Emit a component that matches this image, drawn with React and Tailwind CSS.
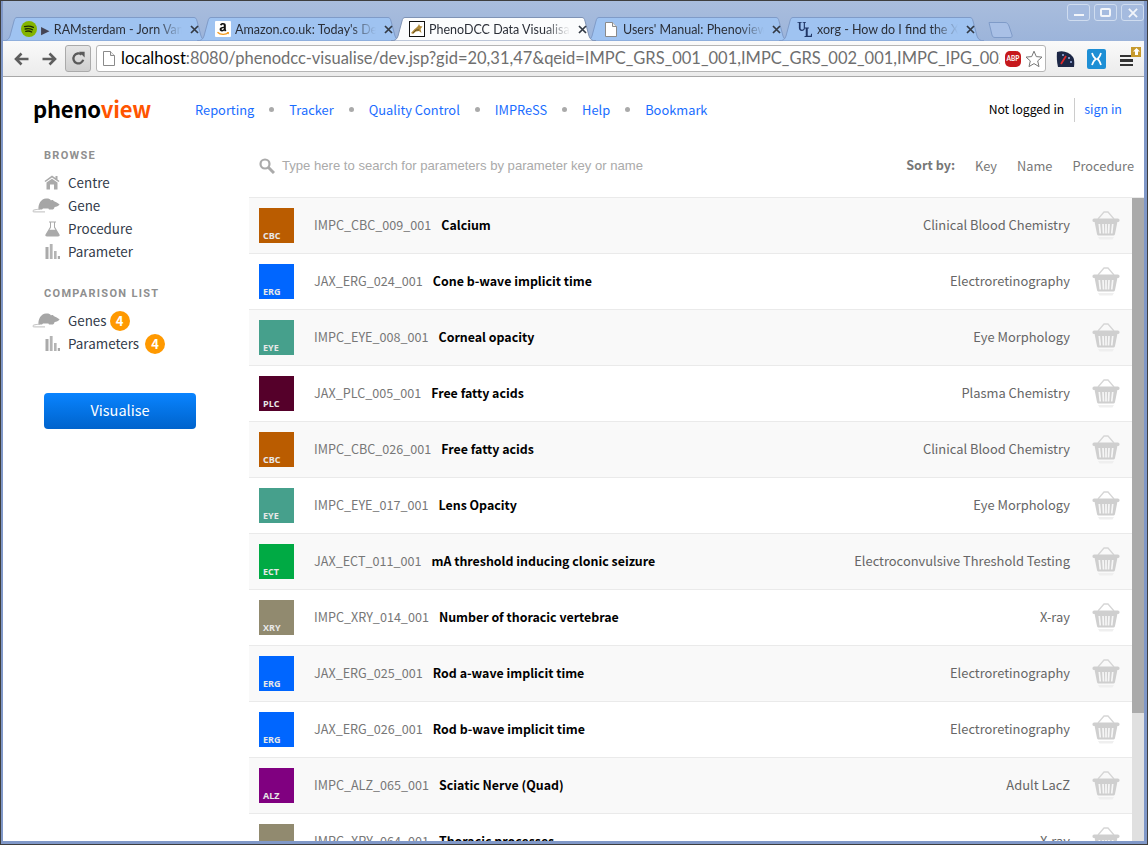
import React from "react";

const PAGE = { fontFamily: '"Noto Sans CJK SC", "Noto Sans", sans-serif' };
const UI = { fontFamily: 'Lato, "Noto Sans", sans-serif' };

const rows = [
  ["CBC", "bg-[#ba5c00]", "IMPC_CBC_009_001", "Calcium", "Clinical Blood Chemistry"],
  ["ERG", "bg-[#0066ff]", "JAX_ERG_024_001", "Cone b-wave implicit time", "Electroretinography"],
  ["EYE", "bg-[#46a08c]", "IMPC_EYE_008_001", "Corneal opacity", "Eye Morphology"],
  ["PLC", "bg-[#55002a]", "JAX_PLC_005_001", "Free fatty acids", "Plasma Chemistry"],
  ["CBC", "bg-[#ba5c00]", "IMPC_CBC_026_001", "Free fatty acids", "Clinical Blood Chemistry"],
  ["EYE", "bg-[#46a08c]", "IMPC_EYE_017_001", "Lens Opacity", "Eye Morphology"],
  ["ECT", "bg-[#00aa44]", "JAX_ECT_011_001", "mA threshold inducing clonic seizure", "Electroconvulsive Threshold Testing"],
  ["XRY", "bg-[#918a6f]", "IMPC_XRY_014_001", "Number of thoracic vertebrae", "X-ray"],
  ["ERG", "bg-[#0066ff]", "JAX_ERG_025_001", "Rod a-wave implicit time", "Electroretinography"],
  ["ERG", "bg-[#0066ff]", "JAX_ERG_026_001", "Rod b-wave implicit time", "Electroretinography"],
  ["ALZ", "bg-[#800080]", "IMPC_ALZ_065_001", "Sciatic Nerve (Quad)", "Adult LacZ"],
  ["XRY", "bg-[#918a6f]", "IMPC_XRY_064_001", "Thoracic processes", "X-ray"],
];

const nav = ["Reporting", "Tracker", "Quality Control", "IMPReSS", "Help", "Bookmark"];

function House() {
  return (
    <svg width="16" height="15" viewBox="0 0 16 15" fill="#aaa">
      <path d="M8 0.5 L0.5 6 L1.5 7 L8 2.5 L14.5 7 L15.5 6 L13.5 4.5 V1 H11.5 V3 Z" />
      <path d="M2.5 7.5 L8 3.8 L13.5 7.5 V14.5 H10 V9.5 H6 V14.5 H2.5 Z" />
    </svg>
  );
}
function Mouse() {
  return (
    <svg width="28" height="15" viewBox="0 0 28 15" fill="#a6a6a6">
      <path d="M6.5 11.5 C6 6 9 1 14 0.6 C16.5 0.4 18 1 19 2.4 C20 1.6 21.4 1.8 21.6 3 C23.6 4 26 5 27.6 6.6 C26.4 8 24.6 8.8 22.6 9 C22.4 10 21.8 11 21 11.5 H17 L16.4 10.6 H11 L10 11.5 Z" />
      <path d="M8 11.2 C4.5 11.4 1 11.8 0.8 13 C0.8 13.8 1.8 13.9 3 13.9 H13" fill="none" stroke="#bdbdbd" strokeWidth="1" />
    </svg>
  );
}
function Flask() {
  return (
    <svg width="15" height="16" viewBox="0 0 15 16" fill="#aaa">
      <path d="M4 0.5 H11 V1.5 H10 V6 L14.5 13.5 C15 14.6 14.4 15.5 13 15.5 H2 C0.6 15.5 0 14.6 0.5 13.5 L5 6 V1.5 H4 Z M6 1.5 V6.4 L4.6 8.8 H10.4 L9 6.4 V1.5 Z" fillRule="evenodd" />
    </svg>
  );
}
function Bars() {
  return (
    <svg width="15" height="15" viewBox="0 0 15 15" fill="#aaa">
      <rect x="0.5" y="3" width="3" height="12" />
      <rect x="4.8" y="0" width="2.8" height="15" fill="#b4b4b4" />
      <rect x="9" y="7" width="2.6" height="8" fill="#b4b4b4" />
      <rect x="12.8" y="12" width="2.2" height="3" />
    </svg>
  );
}
function Basket() {
  return (
    <svg width="28" height="30" viewBox="0 0 28 30" className="block">
      <path d="M6 9 L12 2 H16 L22 9" fill="none" stroke="#d6d6d6" strokeWidth="1.3" />
      <rect x="0.5" y="8.5" width="27" height="3.6" rx="1.6" fill="#cfcfcf" />
      <path d="M2.6 12 H25.4 L23 24 C22.8 25 22 25.6 21 25.6 H7 C6 25.6 5.2 25 5 24 Z" fill="#cfcfcf" />
      <path d="M7.3 14 L8.3 23.5 M11 14 L11.5 23.5 M14 14 V23.5 M17 14 L16.5 23.5 M20.7 14 L19.7 23.5" stroke="#f6f6f6" strokeWidth="1.7" />
      <path d="M6 27 H22 L20.5 29.5 H7.5 Z" fill="#efefef" />
    </svg>
  );
}
function DocIcon({ c = "#fff" }) {
  return (
    <svg width="12" height="15" viewBox="0 0 12 15" className="shrink-0">
      <path d="M0.5 0.5 H7.5 L11.5 4.5 V14.5 H0.5 Z" fill={c} stroke="#8a8a8a" />
      <path d="M7.5 0.5 V4.5 H11.5" fill="#eee" stroke="#8a8a8a" />
    </svg>
  );
}
function Spotify() {
  return (
    <svg width="16" height="16" viewBox="0 0 16 16">
      <circle cx="8" cy="8" r="8" fill="#84b400" />
      <path d="M3.6 5.6 C6.4 4.8 9.8 5 12.4 6.4 M4.2 8 C6.6 7.4 9.4 7.6 11.5 8.8 M4.8 10.3 C6.8 9.8 9 10 10.7 11" stroke="#1c2a05" strokeWidth="1.3" fill="none" strokeLinecap="round" />
    </svg>
  );
}
function Amazon() {
  return (
    <svg width="16" height="16" viewBox="0 0 16 16">
      <rect width="16" height="16" fill="#fff" rx="1" />
      <path d="M5 4 C5.3 2.6 6.6 2 8 2 C9.8 2 10.8 2.8 10.8 4.2 V8.6 L11.4 9.4 L10 10.4 L9.2 9.5 C8.6 10.2 7.8 10.5 6.9 10.5 C5.5 10.5 4.6 9.6 4.6 8.3 C4.6 6.6 6.2 5.8 8.8 5.7 V4.6 C8.8 3.9 8.4 3.5 7.8 3.5 C7.2 3.5 6.9 3.9 6.7 4.4 Z M8.8 6.9 C7.4 7 6.6 7.4 6.6 8.2 C6.6 8.7 6.9 9 7.4 9 C8.2 9 8.8 8.4 8.8 7.6 Z" fill="#111" fillRule="evenodd" />
      <path d="M2.5 11.2 C5.5 14 10.5 14 13.5 11.8" stroke="#f39a1f" strokeWidth="1.4" fill="none" />
      <path d="M11.6 11 L14 11 L13.6 13.4 Z" fill="#f39a1f" />
    </svg>
  );
}
function Pheno() {
  return (
    <svg width="16" height="16" viewBox="0 0 16 16">
      <rect x="0.5" y="0.5" width="15" height="15" fill="#fff" stroke="#111" />
      <path d="M2 12 C4 10 5 8 7 7 L9 5 L10 3 L11 5 L13.5 5.5 L11.5 8 L12.5 12 L10 10 L7 10.5 L4 13 Z" fill="#b08a3a" />
      <path d="M4 12 L7 9 L10 9" stroke="#5b4a22" strokeWidth="0.9" fill="none" />
    </svg>
  );
}
function UL() {
  return (
    <svg width="17" height="17" viewBox="0 0 17 17" fill="#1f3566">
      <path d="M0.5 0.5 H5 V1.4 H3.8 V7 C3.8 8.2 4.4 8.8 5.4 8.8 C6.5 8.8 7.2 8.2 7.2 7 V1.4 H6 V0.5 H9.5 V1.4 H8.4 V7 C8.4 9 7.2 10 5.2 10 C3.2 10 2 9 2 7 V1.4 H0.5 Z" />
      <path d="M8 6.5 H12.6 V7.4 H11.4 V15.2 H14.6 L15 13 H16 L15.8 16.4 H8 V15.5 H9.3 V7.4 H8 Z" />
    </svg>
  );
}

function Tab({ active, icon, title }) {
  return (
    <div className={`relative h-[24px] w-[205px] shrink-0 -mr-[11px] ${active ? "z-10" : ""}`}>
      <svg className="absolute inset-0" width="205" height="24" viewBox="0 0 205 24">
        <path
          d="M0 24 C4 24 6 22 7 19 L11 4 C11.6 1.5 12.5 0.5 14 0.5 H191 C192.5 0.5 193.4 1.5 194 4 L198 19 C199 22 201 24 205 24 Z"
          fill={active ? "#fbfcfd" : "#9fc3f1"}
          stroke={active ? "#7f93b5" : "#7f9bc8"}
          strokeWidth="1"
        />
      </svg>
      <div className="relative flex h-full items-center pl-[18px] pr-[9px]">
        <div className="w-[16px] h-[17px] flex items-center justify-center shrink-0">{icon}</div>
        <div
          className="ml-[4px] flex-1 min-w-0 overflow-hidden whitespace-nowrap text-[12.5px] leading-[17px] text-[#2b2f38] [mask-image:linear-gradient(to_right,#000_82%,transparent_100%)]"
          style={UI}
        >
          {title}
        </div>
        <svg width="9" height="9" viewBox="0 0 9 9" className="ml-[8px] shrink-0">
          <path d="M1 1 L8 8 M8 1 L1 8" stroke="#333a45" strokeWidth="1.7" />
        </svg>
      </div>
    </div>
  );
}

function WinBtn({ children }) {
  return (
    <div className="w-[23px] h-[17px] flex items-center justify-center border border-[#cfdcef] rounded-[3px] bg-[#a5bbdf]">
      {children}
    </div>
  );
}

function Chrome() {
  return (
    <div className="shrink-0" style={UI}>
      <div className="relative h-[40px] bg-gradient-to-b from-[#a9bddd] to-[#9cb4da] flex items-end">
        <Tab icon={<Spotify />} title={<span><span className="text-[11px] text-[#445] mr-[2px]">▶ </span>RAMsterdam - Jorn Van Deynhoven</span>} />
        <Tab icon={<Amazon />} title="Amazon.co.uk: Today's Deals" />
        <Tab active icon={<Pheno />} title="PhenoDCC Data Visualisation" />
        <Tab icon={<DocIcon />} title="Users' Manual: Phenoview" />
        <Tab icon={<UL />} title="xorg - How do I find the X" />
        <svg width="26" height="16" viewBox="0 0 26 16" className="ml-[15px] mb-[3px] shrink-0">
          <path d="M1 0.5 H17 C19 0.5 20 1.5 21 4 L24 13 C24.5 14.5 24 15.5 22 15.5 H7 C5 15.5 4.5 14.5 4 13 Z" fill="#a9c0e6" stroke="#7f9bc8" />
        </svg>
        <div className="absolute right-[0px] top-[3px] flex gap-[4px]">
          <WinBtn><div className="w-[10px] h-[2px] bg-[#f2f5fa] mt-[5px]" /></WinBtn>
          <WinBtn><div className="w-[11px] h-[9px] border-2 border-[#f2f5fa] rounded-[2px]" /></WinBtn>
          <WinBtn>
            <svg width="10" height="10" viewBox="0 0 11 11"><path d="M1 1 L10 10 M10 1 L1 10" stroke="#f2f5fa" strokeWidth="2" /></svg>
          </WinBtn>
        </div>
      </div>
      <div className="h-[36px] bg-gradient-to-b from-[#fafafa] to-[#ebebeb] border-b border-[#a8a8a8] flex items-center pl-[11px]">
        <svg width="15" height="14" viewBox="0 0 15 14" className="shrink-0">
          <path d="M14.5 7 H3 M7.5 1.5 L2 7 L7.5 12.5" stroke="#5e5e5e" strokeWidth="2.6" fill="none" />
        </svg>
        <svg width="15" height="14" viewBox="0 0 15 14" className="ml-[13px] shrink-0">
          <path d="M0.5 7 H12 M7.5 1.5 L13 7 L7.5 12.5" stroke="#5e5e5e" strokeWidth="2.6" fill="none" />
        </svg>
        <div className="ml-[8px] w-[26px] h-[27px] rounded-[3px] border border-[#aaa] bg-gradient-to-b from-[#e6e6e6] to-[#cfcfcf] flex items-center justify-center shrink-0">
          <svg width="15" height="15" viewBox="0 0 15 15">
            <path d="M12.2 8.8 A5 5 0 1 1 10.6 3.6" stroke="#5a5a5a" strokeWidth="2.3" fill="none" />
            <path d="M8 0.8 L13.6 0.8 L13.6 6.4 Z" fill="#5a5a5a" />
          </svg>
        </div>
        <div className="ml-[5px] w-[950px] shrink-0 h-[27px] rounded-[3px] border border-[#b5b5b5] bg-white flex items-center pl-[6px]">
          <DocIcon />
          <div className="ml-[6px] w-[879px] overflow-hidden whitespace-nowrap text-[16.5px] text-[#6f6f6f] shrink-0">
            <span className="text-black">localhost</span>:8080/phenodcc-visualise/dev.jsp?gid=20,31,47&amp;qeid=IMPC_GRS_001_001,IMPC_GRS_002_001,IMPC_IPG_002_001
          </div>
          <div className="ml-[5px] w-[16px] h-[16px] rounded-[5px] bg-[#c6191c] flex items-center justify-center text-[6.5px] font-bold text-white shrink-0">ABP</div>
          <svg width="18" height="18" viewBox="0 0 18 18" className="ml-[4px] shrink-0">
            <path d="M9 1.2 L11.3 6.6 L17 7.1 L12.7 10.9 L14 16.6 L9 13.6 L4 16.6 L5.3 10.9 L1 7.1 L6.7 6.6 Z" fill="#fff" stroke="#777" strokeWidth="1" />
          </svg>
        </div>
        <svg width="19" height="19" viewBox="0 0 19 19" className="ml-[10px] shrink-0">
          <path d="M1 3 C7 1 13 3 17 8 C18.4 10 18.5 14 18 18 H2 C0.8 13 0.6 8 1 3 Z" fill="#1d2746" />
          <path d="M5 15 L10 7" stroke="#e02b2b" strokeWidth="1.8" />
          <circle cx="13" cy="9" r="1" fill="#9fb4e6" /><circle cx="15" cy="13" r="1" fill="#9fb4e6" /><circle cx="7" cy="6" r="1" fill="#9fb4e6" />
        </svg>
        <svg width="19" height="20" viewBox="0 0 19 20" className="ml-[12px] shrink-0">
          <rect width="19" height="20" rx="2" fill="#1e8fd5" />
          <path d="M5 4 C6 7 7 9 9 10 C7 11 6 13 5 16 M14 4 C13 7 12 9 10.5 10 C12 11 13 13 14 16" stroke="#fff" strokeWidth="1.7" fill="none" />
        </svg>
        <div className="relative ml-[14px] w-[14px] h-[20px] shrink-0">
          <div className="absolute left-0 top-[6px] flex flex-col gap-[2px]">
            <div className="w-[13px] h-[2.5px] bg-[#333]" />
            <div className="w-[13px] h-[2.5px] bg-[#333]" />
            <div className="w-[13px] h-[2.5px] bg-[#333]" />
          </div>
          <div className="absolute right-[-7px] top-[-2px] w-[10px] h-[10px] bg-[#c79a2d] flex items-center justify-center">
            <svg width="7" height="7" viewBox="0 0 7 7"><path d="M3.5 0 L7 3.5 H5 V7 H2 V3.5 H0 Z" fill="#fff" /></svg>
          </div>
        </div>
      </div>
    </div>
  );
}

function SideItem({ icon, label, badge, gap = "ml-[4px]" }) {
  return (
    <div className="flex items-center h-[23px]">
      <div className="w-[28px] -ml-[4px] mr-[8px] flex justify-end items-center">{icon}</div>
      <span className="text-[13.4px] text-[#333b4a]">{label}</span>
      {badge && (
        <span className={`${gap} w-[20px] h-[20px] rounded-full bg-[#ff9900] text-white text-[13px] font-bold flex items-center justify-center leading-none`}>
          {badge}
        </span>
      )}
    </div>
  );
}

function Sidebar() {
  const head = "ml-[8px] text-[11px] leading-[14px] font-bold tracking-[1.3px] text-[#8f8f8f]";
  return (
    <aside className="w-[246px] shrink-0 pt-[7px] pl-[33px]">
      <h3 className={head} style={{ fontFamily: "Roboto, sans-serif" }}>BROWSE</h3>
      <div className="mt-[8px]">
        <SideItem icon={<House />} label="Centre" />
        <SideItem icon={<Mouse />} label="Gene" />
        <SideItem icon={<Flask />} label="Procedure" />
        <SideItem icon={<Bars />} label="Parameter" />
      </div>
      <h3 className={`mt-[24px] ${head}`} style={{ fontFamily: "Roboto, sans-serif" }}>COMPARISON LIST</h3>
      <div className="mt-[8px]">
        <SideItem icon={<Mouse />} label="Genes" badge="4" gap="ml-[3px]" />
        <SideItem icon={<Bars />} label="Parameters" badge="4" gap="ml-[6px]" />
      </div>
      <button className="mt-[38px] ml-[8px] block w-[152px] h-[36px] pb-[3px] rounded-[4px] bg-gradient-to-b from-[#0a84ff] to-[#0063cc] text-white text-[14.5px]" style={PAGE}>Visualise</button>
    </aside>
  );
}

function Row({ r, i }) {
  return (
    <div className={`h-[56px] shrink-0 flex items-center pl-[10px] border-b border-[#eaeaea] ${i % 2 === 0 ? "bg-[#f9f9f9]" : "bg-white"}`}>
      <div className={`relative w-[35px] h-[35px] shrink-0 ${r[1]}`}>
        <span className="absolute left-[4px] bottom-[1px] text-[9px] leading-[12px] font-bold text-[#e8e8e8]" style={{ fontFamily: '"Open Sans", sans-serif' }}>{r[0]}</span>
      </div>
      <span className="ml-[20px] text-[12.6px] text-[#777]">{r[2]}</span>
      <span className="ml-[10px] text-[12.4px] font-bold text-black">{r[3]}</span>
      <span className="ml-auto pb-[2px] text-[12.9px] text-[#666]">{r[4]}</span>
      <div className="ml-[22px] mr-[12px] w-[28px] shrink-0 pb-[1px]"><Basket /></div>
    </div>
  );
}

export default function App() {
  return (
    <div className="w-[1148px] h-[845px] overflow-hidden bg-[#3e3e3e] p-[1px]" style={PAGE}>
      <div className="h-full flex flex-col border-l-2 border-r-[3px] border-b-[3px] border-[#8098c8]">
        <Chrome />
        <div className="flex-1 min-h-0 bg-white flex flex-col">
          <header className="h-[65px] shrink-0 flex items-center pl-[30px]">
            <div className="w-[162px] pb-[3px] text-[22px] font-bold leading-none -tracking-[0.2px]">
              <span className="text-black">pheno</span><span className="text-[#ff5500]">view</span>
            </div>
            <nav className="flex items-center text-[12.85px] text-[#1a6dff]">
              {nav.map((n, i) => (
                <React.Fragment key={n}>
                  {i > 0 && <span className="mx-[15px] w-[5px] h-[5px] rounded-full bg-[#aaa]" />}
                  <span>{n}</span>
                </React.Fragment>
              ))}
            </nav>
            <div className="ml-auto flex items-center pr-[22px]">
              <span className="text-[12.2px] text-black">Not logged in</span>
              <span className="ml-[10px] mr-[9px] w-px h-[24px] bg-[#ccc]" />
              <span className="text-[12.5px] text-[#1a6dff]">sign in</span>
            </div>
          </header>
          <div className="flex-1 min-h-0 flex">
            <Sidebar />
            <main className="flex-1 min-w-0 flex flex-col">
              <div className="h-[55px] shrink-0 flex items-center pl-[10px] pb-[8px] pr-[10px]">
                <svg width="16" height="16" viewBox="0 0 16 16">
                  <circle cx="6" cy="6" r="4.5" stroke="#aaa" strokeWidth="2.2" fill="none" />
                  <path d="M9.5 9.5 L15 15" stroke="#aaa" strokeWidth="3" />
                </svg>
                <span className="ml-[7px] text-[13.1px] text-[#aaa]" style={{ fontFamily: '"Liberation Sans", sans-serif' }}>Type here to search for parameters by parameter key or name</span>
                <div className="ml-auto flex items-center text-[12.8px] text-[#777]">
                  <span className="font-bold mr-[20px] text-[12.6px]">Sort by:</span>
                  <span className="mr-[20px]">Key</span>
                  <span className="mr-[20px]">Name</span>
                  <span>Procedure</span>
                </div>
              </div>
              <div className="flex-1 min-h-0 flex border-t border-[#eaeaea]">
                <div className="flex-1 min-w-0 flex flex-col overflow-hidden">
                  {rows.map((r, i) => <Row key={i} r={r} i={i} />)}
                </div>
                <div className="w-[12px] shrink-0 bg-[#e0e0e0]">
                  <div className="h-[515px] bg-[#aaaaaa]" />
                </div>
              </div>
            </main>
          </div>
        </div>
      </div>
    </div>
  );
}
